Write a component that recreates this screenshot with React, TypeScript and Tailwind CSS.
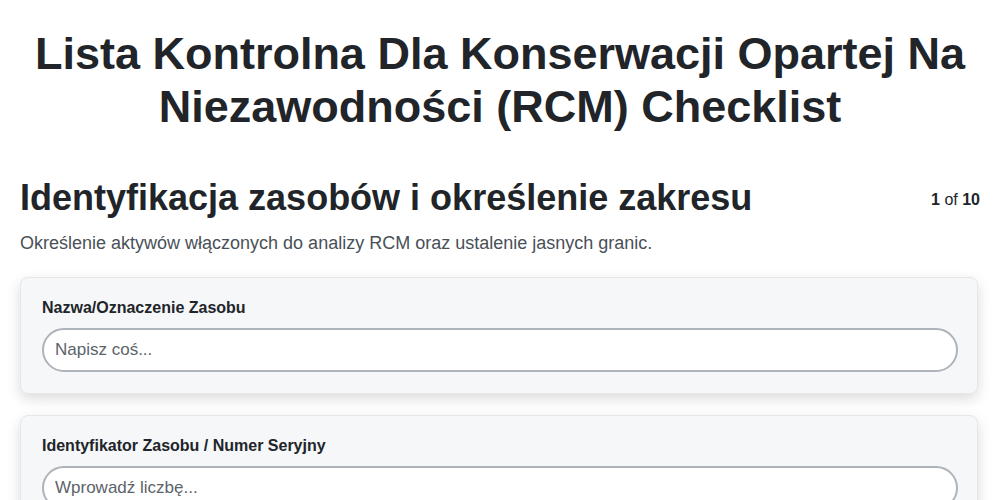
const fields = [
  { label: "Nazwa/Oznaczenie Zasobu", placeholder: "Napisz coś...", type: "text" },
  { label: "Identyfikator Zasobu / Numer Seryjny", placeholder: "Wprowadź liczbę...", type: "number" },
];

function FieldCard({ label, placeholder, type }: { label: string; placeholder: string; type: string }) {
  return (
    <div className="rounded-lg border border-[#e5e7eb] bg-[#f6f7f9] pl-[21px] pr-[19px] pt-[19px] pb-[21px] shadow-[0_5px_14px_rgba(0,0,0,0.14)]">
      <label className="block text-[16px] font-bold text-[#212529] leading-[22px] mb-[9px]">{label}</label>
      <input
        type={type}
        placeholder={placeholder}
        className="w-full h-[44px] rounded-full border-2 border-[#adb3ba] bg-white px-[11px] text-[17px] text-[#212529] placeholder:text-[#5c636a] outline-none"
      />
    </div>
  );
}

export default function App() {
  return (
    <div className="min-h-screen bg-white text-[#212529]" style={{ fontFamily: '"Liberation Sans", Arial, sans-serif' }}>
      <h1 className="pt-[27px] text-center text-[45px] font-bold leading-[53px] px-6">
        Lista Kontrolna Dla Konserwacji Opartej Na Niezawodności (RCM) Checklist
      </h1>
      <div className="px-[20px] pt-[43px]">
        <div className="flex items-start justify-between">
          <h2 className="text-[36px] font-bold leading-[44px]">Identyfikacja zasobów i określenie zakresu</h2>
          <div className="pt-[12px] text-[16px] text-[#212529]">
            <span className="font-bold">1</span> of <span className="font-bold">10</span>
          </div>
        </div>
        <p className="mt-[10px] text-[18px] leading-[26px] text-[#495057]">
          Określenie aktywów włączonych do analizy RCM oraz ustalenie jasnych granic.
        </p>
        <div className="mt-[21px] flex flex-col gap-[21px] pr-[2px]">
          {fields.map((f) => (
            <FieldCard key={f.label} {...f} />
          ))}
        </div>
      </div>
    </div>
  );
}
